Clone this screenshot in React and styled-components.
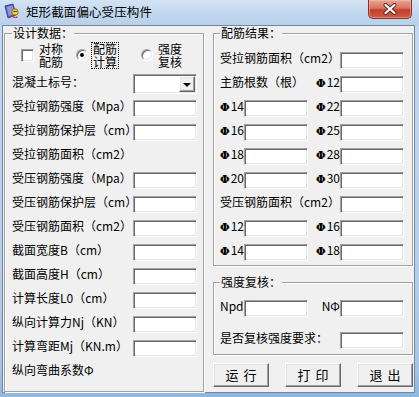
import React from 'react';
import styled, { createGlobalStyle } from 'styled-components';

const GlobalStyle = createGlobalStyle`
  html, body {
    margin: 0;
    padding: 0;
    background: #ffffff;
  }
  body {
    font-family: "Noto Sans CJK SC", "Liberation Sans", sans-serif;
    font-size: 12px;
    color: #000;
  }
`;

const Window = styled.div`
  width: 419px;
  height: 397px;
  display: flex;
  flex-direction: column;
  overflow: hidden;
  background: linear-gradient(180deg, #c6daf0 0%, #b9d0ea 60%, #a9c5e5 92%, #8fb6dc 100%);
`;

const TitleBar = styled.div`
  height: 26px;
  flex: none;
  display: flex;
  align-items: flex-start;
  padding-left: 4px;
  background: linear-gradient(180deg, #d3e3f4 0%, #c2d7ee 50%, #b9d0ea 100%);
`;

const TitleIcon = styled.svg`
  width: 16px;
  height: 16px;
  margin-top: 3px;
  flex: none;
`;

const TitleText = styled.div`
  margin-left: 6px;
  margin-top: 4px;
  font-size: 12.5px;
  line-height: 16px;
  letter-spacing: 0.1px;
  color: #000;
  flex: 1;
`;

const CloseButton = styled.div`
  width: 44px;
  height: 19px;
  box-sizing: border-box;
  margin-right: 7px;
  border: 1px solid #8b2f21;
  border-top: none;
  border-radius: 0 0 5px 5px;
  background: linear-gradient(180deg, #e6a595 0%, #d8735e 45%, #c4402a 55%, #cf5a42 100%);
  box-shadow: inset 0 0 0 1px rgba(255, 200, 190, 0.45);
  display: flex;
  align-items: center;
  justify-content: center;
`;

const Client = styled.div`
  flex: 1;
  margin: 0 5px 5px 3px;
  padding: 0 1px;
  display: flex;
  gap: 9px;
  background: #f0f0f0;
  box-shadow: 0 0 0 1px #6f87a3;
`;

const Group = styled.fieldset`
  margin: ${(p) => p.$top || 0}px 0 0 0;
  padding: ${(p) => p.$pad};
  width: 200px;
  box-sizing: border-box;
  min-width: 0;
  border: 1px solid #a0a0a0;
  box-shadow: inset 1px 1px 0 #ffffff, 1px 1px 0 #ffffff;
`;

const Legend = styled.legend`
  padding: 0 1px;
  font-size: 12px;
  line-height: 14px;
  background: #f0f0f0;
`;

const RightColumn = styled.div`
  display: flex;
  flex-direction: column;
  width: 200px;
`;

const OptionsRow = styled.div`
  height: 30px;
  margin-bottom: 2px;
  padding-left: 9px;
  display: flex;
  align-items: center;
`;

const Option = styled.div`
  width: ${(p) => p.$w}px;
  flex: none;
  display: flex;
  align-items: center;
  gap: 5px;
`;

const OptionLabel = styled.div`
  display: flex;
  flex-direction: column;
  gap: 1px;
  padding: 0 1px;
  margin-left: -1px;
  outline: ${(p) => (p.$focus ? '1px dotted #000' : 'none')};
`;

const OptionLine = styled.span`
  font-size: 12px;
  line-height: 12px;
  height: 12px;
`;

const sunken = `
  border: 1px solid;
  border-color: #a0a0a0 #ffffff #ffffff #a0a0a0;
  box-shadow: inset 1px 1px 0 #696969, inset -1px -1px 0 #e3e3e3;
`;

const raised = `
  border: 1px solid;
  border-color: #ffffff #696969 #696969 #ffffff;
  box-shadow: inset -1px -1px 0 #a0a0a0, inset 1px 1px 0 #e3e3e3;
  background: #f0f0f0;
`;

const CheckBox = styled.div`
  width: 13px;
  height: 13px;
  box-sizing: border-box;
  background: #fff;
  ${sunken}
`;

const Radio = styled.div`
  width: 12px;
  height: 12px;
  box-sizing: border-box;
  border-radius: 50%;
  background: #fff;
  border: 1px solid;
  border-color: #a0a0a0 #ffffff #ffffff #a0a0a0;
  box-shadow: inset 1px 1px 0 #696969, inset -1px -1px 0 #e3e3e3;
  display: flex;
  align-items: center;
  justify-content: center;

  &::after {
    content: '';
    width: 4px;
    height: 4px;
    border-radius: 50%;
    background: ${(p) => (p.$checked ? '#000' : 'transparent')};
  }
`;

const Row = styled.div`
  height: 24px;
  display: flex;
  align-items: center;
`;

const Label = styled.div`
  flex: 1;
  min-width: 0;
  white-space: nowrap;
  margin-bottom: 5px;
`;

const Field = styled.div`
  width: 64px;
  height: 17px;
  box-sizing: border-box;
  flex: none;
  background: #fff;
  ${sunken}
`;

const Combo = styled.div`
  width: 64px;
  height: 20px;
  box-sizing: border-box;
  flex: none;
  background: #fff;
  padding: 1px;
  display: flex;
  justify-content: flex-end;
  ${sunken}
`;

const ComboButton = styled.div`
  width: 16px;
  height: 16px;
  box-sizing: border-box;
  ${raised}
  display: flex;
  align-items: center;
  justify-content: center;

  &::after {
    content: '';
    border-left: 4px solid transparent;
    border-right: 4px solid transparent;
    border-top: 4px solid #000;
    margin-top: 1px;
  }
`;

const Grid = styled.div`
  display: grid;
  grid-template-columns: 24px 64px 32px 64px;
  grid-auto-rows: 24px;
  row-gap: ${(p) => p.$gap || 0}px;
  align-items: center;
`;

const GridLabel = styled.div`
  grid-column: ${(p) => p.$span};
  white-space: nowrap;
  margin-bottom: 5px;
  text-align: ${(p) => (p.$right ? 'right' : 'left')};
`;

const BarMark = styled.span`
  font-family: "DejaVu Serif", serif;
  font-weight: bold;
  font-size: 11px;
  margin-right: 1px;
`;

const ButtonRow = styled.div`
  margin-top: 8px;
  display: flex;
  justify-content: space-between;
`;

const Button = styled.div`
  width: 56px;
  height: 24px;
  box-sizing: border-box;
  ${raised}
  display: flex;
  align-items: center;
  justify-content: center;
  gap: 5px;
  font-size: 13px;
  padding-bottom: 2px;
`;

function Bar({ d }) {
  return (
    <>
      <BarMark>Φ</BarMark>
      {d}
    </>
  );
}

function TwoLine({ a, b, focus }) {
  return (
    <OptionLabel $focus={focus}>
      <OptionLine>{a}</OptionLine>
      <OptionLine>{b}</OptionLine>
    </OptionLabel>
  );
}

function SpacedButton({ a, b }) {
  return (
    <Button>
      <span>{a}</span>
      <span>{b}</span>
    </Button>
  );
}

const leftRows = [
  ['受拉钢筋强度（Mpa）', true],
  ['受拉钢筋保护层（cm）', true],
  ['受拉钢筋面积（cm2）', false],
  ['受压钢筋强度（Mpa）', true],
  ['受压钢筋保护层（cm）', true],
  ['受压钢筋面积（cm2）', true],
  ['截面宽度B（cm）', true],
  ['截面高度H（cm）', true],
  ['计算长度L0（cm）', true],
  ['纵向计算力Nj（KN）', true],
  ['计算弯距Mj（KN.m）', true],
  ['纵向弯曲系数Φ', false]
];

const pairsTension = [
  ['14', '22'],
  ['16', '25'],
  ['18', '28'],
  ['20', '30']
];

const pairsCompression = [
  ['12', '16'],
  ['14', '18']
];

function PairRows({ pairs }) {
  return pairs.map(([a, b]) => (
    <React.Fragment key={a + b}>
      <GridLabel $span="1" $right>
        <Bar d={a} />
      </GridLabel>
      <Field />
      <GridLabel $span="3" $right>
        <Bar d={b} />
      </GridLabel>
      <Field />
    </React.Fragment>
  ));
}

export default function App() {
  return (
    <Window>
      <GlobalStyle />
      <TitleBar>
        <TitleIcon viewBox="0 0 16 16">
          <path d="M1 3 L9 1 L12 12 L4 15 Z" fill="#5b5fc7" stroke="#2b2d7a" strokeWidth="0.8" />
          <path d="M2.5 4 L8.5 2.5 L10.5 11 L4.8 13 Z" fill="#8f93e8" />
          <circle cx="11" cy="9" r="3.2" fill="#f6d02c" stroke="#6b4a00" strokeWidth="0.7" />
          <path d="M9 12 Q11 16 13.5 12.5 L13 15 L9.5 15 Z" fill="#d8282a" />
          <circle cx="10.2" cy="8.4" r="0.6" fill="#000" />
          <circle cx="12" cy="8.4" r="0.6" fill="#000" />
        </TitleIcon>
        <TitleText>矩形截面偏心受压构件</TitleText>
        <CloseButton>
          <svg width="16" height="12" viewBox="0 0 16 12">
            <path d="M3.5 2 L12.5 10 M12.5 2 L3.5 10" stroke="#5a2a24" strokeWidth="4" strokeLinecap="round" />
            <path d="M3.5 2 L12.5 10 M12.5 2 L3.5 10" stroke="#ffffff" strokeWidth="2.2" strokeLinecap="round" />
          </svg>
        </CloseButton>
      </TitleBar>
      <Client>
        <Group $pad="0 6px 0 7px">
          <Legend>设计数据：</Legend>
          <OptionsRow>
            <Option $w={55}>
              <CheckBox />
              <TwoLine a="对称" b="配筋" />
            </Option>
            <Option $w={65}>
              <Radio $checked />
              <TwoLine a="配筋" b="计算" focus />
            </Option>
            <Option $w={60}>
              <Radio />
              <TwoLine a="强度" b="复核" />
            </Option>
          </OptionsRow>
          <Row>
            <Label>混凝土标号：</Label>
            <Combo>
              <ComboButton />
            </Combo>
          </Row>
          {leftRows.map(([text, hasField]) => (
            <Row key={text}>
              <Label>{text}</Label>
              {hasField && <Field />}
            </Row>
          ))}
        </Group>
        <RightColumn>
          <Group $pad="8px 7px 1px 6px">
            <Legend>配筋结果：</Legend>
            <Grid>
              <GridLabel $span="1 / 4">受拉钢筋面积（cm2）</GridLabel>
              <Field />
              <GridLabel $span="1 / 3">主筋根数（根）</GridLabel>
              <GridLabel $span="3" $right>
                <Bar d="12" />
              </GridLabel>
              <Field />
              <PairRows pairs={pairsTension} />
              <GridLabel $span="1 / 4">受压钢筋面积（cm2）</GridLabel>
              <Field />
              <PairRows pairs={pairsCompression} />
            </Grid>
          </Group>
          <Group $top={9} $pad="7px 7px 2px 6px">
            <Legend>强度复核：</Legend>
            <Grid $gap={8}>
              <GridLabel $span="1">Npd</GridLabel>
              <Field />
              <GridLabel $span="3" $right>
                NΦ
              </GridLabel>
              <Field />
              <GridLabel $span="1 / 4">是否复核强度要求：</GridLabel>
              <Field />
            </Grid>
          </Group>
          <ButtonRow>
            <SpacedButton a="运" b="行" />
            <SpacedButton a="打" b="印" />
            <SpacedButton a="退" b="出" />
          </ButtonRow>
        </RightColumn>
      </Client>
    </Window>
  );
}
